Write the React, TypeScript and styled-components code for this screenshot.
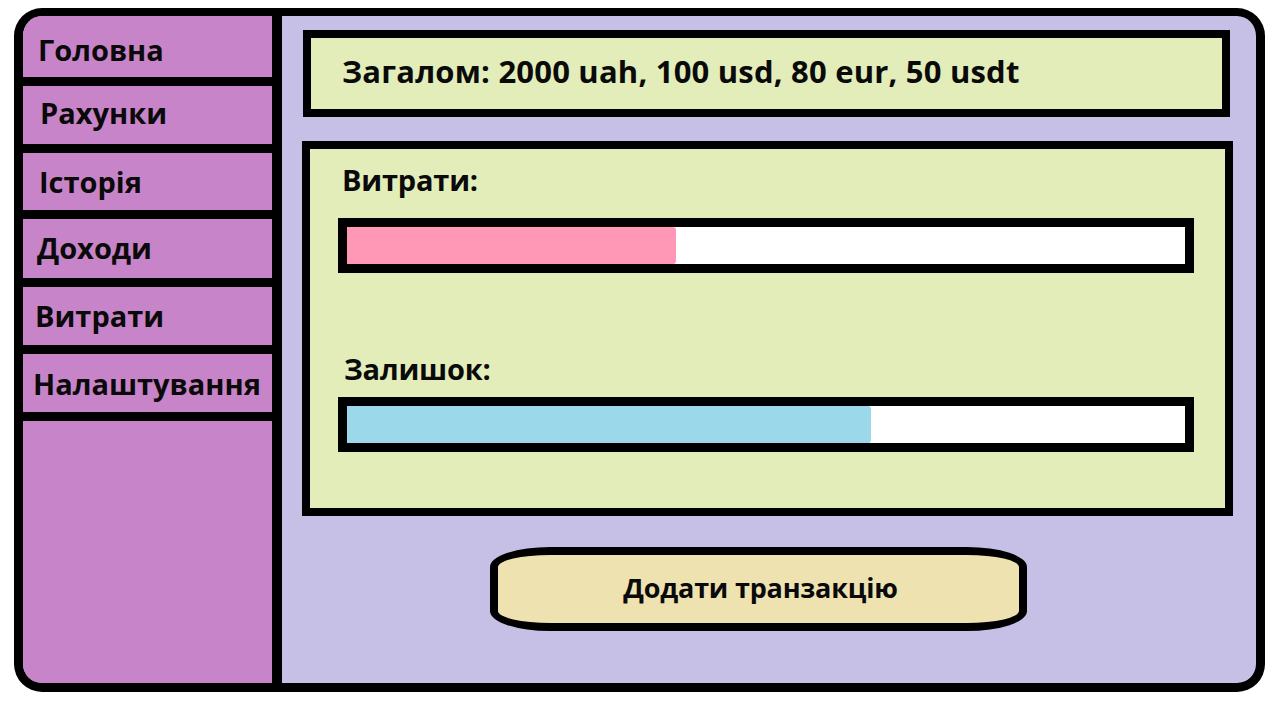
import styled, { createGlobalStyle } from "styled-components";

const GlobalStyle = createGlobalStyle`
    html, body {
        margin: 0;
        padding: 0;
        background-color: #ffffff;
        font-family: "Open Sans", Lato, "Noto Sans", sans-serif;
        color: #0a0a0a;
    }
`

const Page = styled.div`
    width: 1280px;
    height: 708px;
    padding: 8px 0 0 14px;
    box-sizing: border-box;
`

const Frame = styled.div`
    width: 1251px;
    height: 684px;
    box-sizing: border-box;
    border: 9px solid #000;
    border-top-width: 8px;
    border-radius: 28px;
    overflow: hidden;
    display: flex;
    background-color: #c6bfe6;
`

const Sidebar = styled.nav`
    width: 259px;
    flex-shrink: 0;
    box-sizing: border-box;
    border-right: 10px solid #000;
    background-color: #c884c8;
    display: flex;
    flex-direction: column;
`

const NavItem = styled.div<{$height: number, $indent: number, $shift: number}>`
    height: ${props => props.$height}px;
    border-bottom: 9px solid #000;
    display: flex;
    align-items: center;
    padding-left: ${props => props.$indent}px;
    font-size: 29px;
    font-weight: 700;
    line-height: 34px;
    white-space: nowrap;

    & > span {
        position: relative;
        top: ${props => props.$shift}px;
    }
`

const Main = styled.main`
    flex: 1;
    display: flex;
    flex-direction: column;
    padding: 14px 23px 0 20px;
`

const SummaryBox = styled.div`
    height: 87px;
    margin: 0 3px 0 1px;
    box-sizing: border-box;
    border: 8px solid #000;
    background-color: #e2edb9;
    padding: 16px 0 0 31px;
    font-size: 31px;
    font-weight: 700;
    line-height: 34px;
    letter-spacing: 0.2px;
    white-space: nowrap;
`

const StatsBox = styled.div`
    height: 375px;
    margin-top: 24px;
    box-sizing: border-box;
    border: 8px solid #000;
    background-color: #e2edb9;
    padding: 14px 31px 0 28px;
    display: flex;
    flex-direction: column;
`

const Label = styled.div<{$top: number, $indent: number}>`
    margin-top: ${props => props.$top}px;
    padding-left: ${props => props.$indent}px;
    font-size: 29px;
    font-weight: 700;
    line-height: 34px;
    letter-spacing: -0.2px;
`

const Bar = styled.div<{$top: number}>`
    margin-top: ${props => props.$top}px;
    height: 55px;
    box-sizing: border-box;
    border: 9px solid #000;
    background-color: #ffffff;
`

const Fill = styled.div<{$color: string}>`
    height: 100%;
    background-color: ${props => props.$color};
    border-radius: 0 3px 3px 0;
`

const AddButton = styled.button`
    align-self: flex-start;
    margin: 31px 0 0 188px;
    width: 537px;
    height: 84px;
    box-sizing: border-box;
    border: 8px solid #000;
    border-radius: 60px / 20px;
    background-color: #eee2b0;
    font-family: "Open Sans", Lato, "Noto Sans", sans-serif;
    font-size: 27px;
    font-weight: 700;
    letter-spacing: -0.2px;
    color: #0a0a0a;
    padding: 0 0 4px 4px;
    cursor: pointer;
`

const menu = [
    { title: "Головна", height: 61, indent: 15, shift: 3 },
    { title: "Рахунки", height: 58, indent: 17, shift: -2 },
    { title: "Історія", height: 57, indent: 16, shift: 0 },
    { title: "Доходи", height: 59, indent: 14, shift: -1 },
    { title: "Витрати", height: 58, indent: 12, shift: 0 },
    { title: "Налаштування", height: 58, indent: 10, shift: 1 },
]

export default function App() {
    const spent = 39.3;     // percent of the bar
    const left = 62.5;

    return (
        <>
            <GlobalStyle />
            <Page>
                <Frame>
                    <Sidebar>
                        {menu.map(item => (
                            <NavItem key={item.title} $height={item.height} $indent={item.indent} $shift={item.shift}>
                                <span>{item.title}</span>
                            </NavItem>
                        ))}
                    </Sidebar>
                    <Main>
                        <SummaryBox>Загалом: 2000 uah, 100 usd, 80 eur, 50 usdt</SummaryBox>
                        <StatsBox>
                            <Label $top={0} $indent={4}>Витрати:</Label>
                            <Bar $top={21}>
                                <Fill $color="#ff97b6" style={{ width: `${spent}%` }} />
                            </Bar>
                            <Label $top={79} $indent={6}>Залишок:</Label>
                            <Bar $top={11}>
                                <Fill $color="#9bd9ea" style={{ width: `${left}%` }} />
                            </Bar>
                        </StatsBox>
                        <AddButton>Додати транзакцію</AddButton>
                    </Main>
                </Frame>
            </Page>
        </>
    )
}
